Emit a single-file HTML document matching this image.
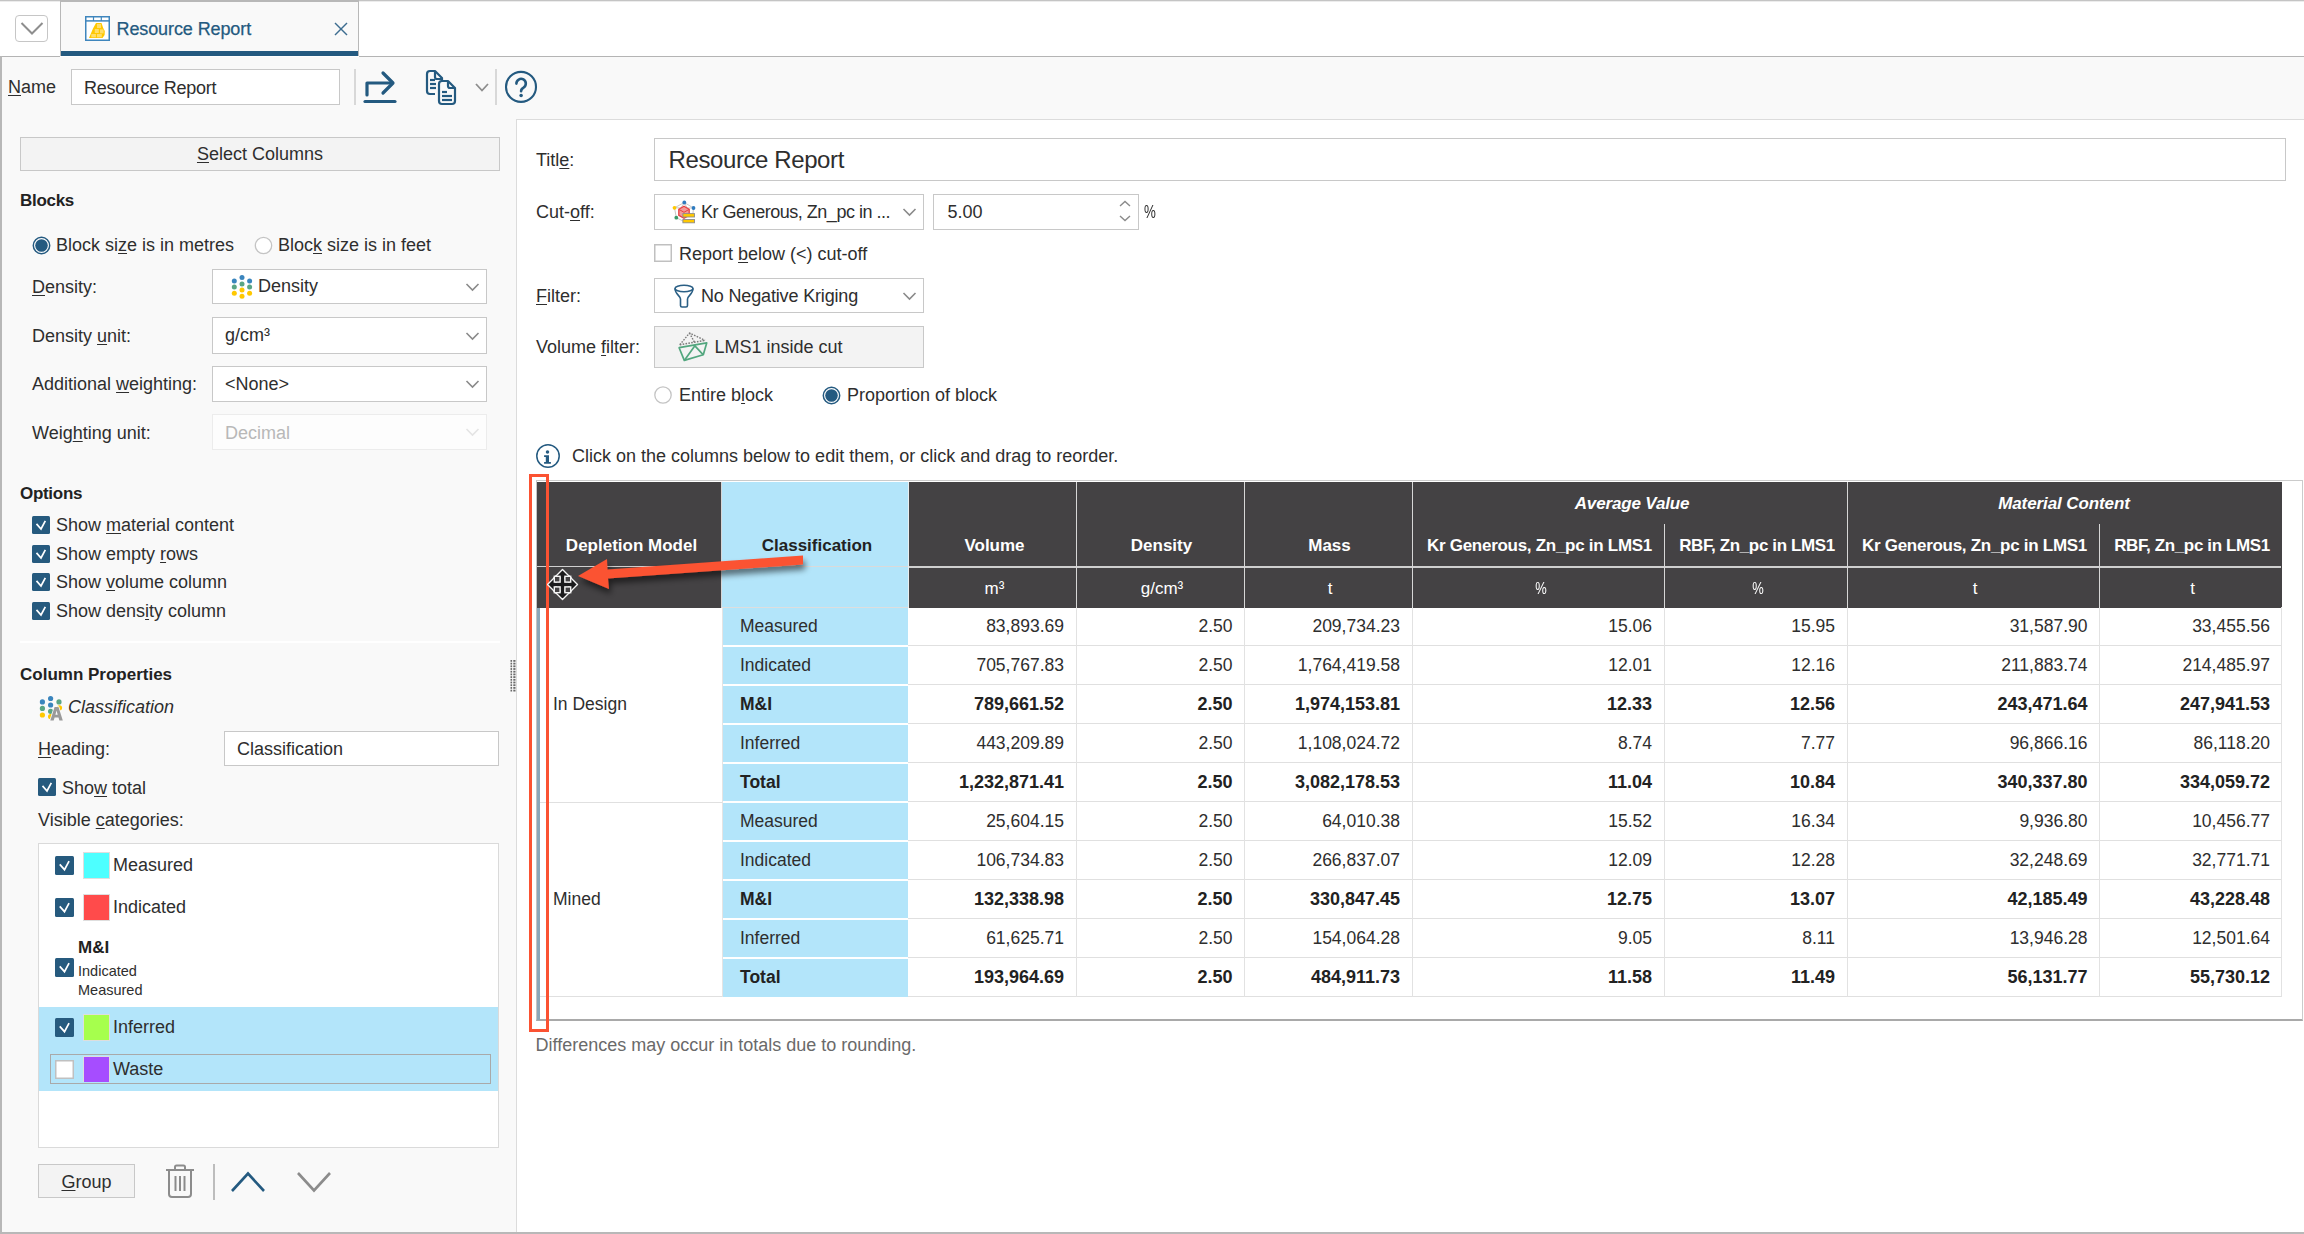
<!DOCTYPE html><html><head><meta charset="utf-8"><style>
html,body{margin:0;padding:0;}
body{width:2304px;height:1234px;position:relative;overflow:hidden;background:#fff;font-family:"Liberation Sans",sans-serif;color:#2e2e2e;}
.t{position:absolute;white-space:pre;}
u{text-decoration:underline;text-underline-offset:2px;text-decoration-thickness:1px;}
</style></head><body>

<div style="position:absolute;left:0px;top:0px;width:2304px;height:1px;background:#c4c4c4"></div>
<div style="position:absolute;left:0px;top:1px;width:2304px;height:1px;background:#ececec"></div>
<div style="position:absolute;left:15px;top:15px;width:31px;height:25px;border:1.5px solid #c6c6c6;border-radius:4px;background:#fff"></div>
<svg style="position:absolute;left:15px;top:15px;" width="34" height="28" viewBox="0 0 34 28"><polyline points="6.5,8 17,18.5 27.5,8" fill="none" stroke="#8e8e8e" stroke-width="2"/></svg>
<div style="position:absolute;left:60px;top:0px;width:299px;height:56px;background:#f9f9f9;border-left:1px solid #b8b8b8;border-right:1px solid #b8b8b8;box-sizing:border-box;border-top:2px solid #b8b8b8"></div>
<div style="position:absolute;left:61px;top:51px;width:297px;height:5px;background:#245a80"></div>
<svg style="position:absolute;left:85px;top:16px;" width="25" height="25" viewBox="0 0 25 25"><rect x="0.75" y="0.75" width="23.5" height="23.5" fill="#fff" stroke="#3f86bd" stroke-width="1.5"/>
<line x1="0.75" y1="4.9" x2="24.25" y2="4.9" stroke="#3f86bd" stroke-width="1.5"/>
<line x1="8.5" y1="1" x2="8.5" y2="5" stroke="#3f86bd" stroke-width="1.2"/><line x1="16.3" y1="1" x2="16.3" y2="5" stroke="#3f86bd" stroke-width="1.2"/>
<polygon points="4,22 8,12.5 11,7 16.5,7 18.2,12 19.8,15 19.6,19 17.5,22" fill="#ffc800"/>
<g fill="#ffde6a"><rect x="6.3" y="18" width="4.6" height="3.3"/><rect x="12" y="18" width="4.8" height="3.3"/><rect x="9.8" y="13" width="4" height="4"/><rect x="15" y="13.4" width="3.6" height="4"/><rect x="12" y="8" width="4" height="4"/></g></svg>
<div class="t" style="left:116.5px;top:20.26px;font-size:18px;line-height:18px;color:#245a80;letter-spacing:-0.1px;-webkit-text-stroke:0.25px #245a80;">Resource Report</div>
<svg style="position:absolute;left:334px;top:22px;" width="14" height="14" viewBox="0 0 14 14"><line x1="1" y1="1" x2="13" y2="13" stroke="#3d6d90" stroke-width="1.4"/><line x1="13" y1="1" x2="1" y2="13" stroke="#3d6d90" stroke-width="1.4"/></svg>
<div style="position:absolute;left:0px;top:56px;width:60px;height:1px;background:#b4b4b4"></div>
<div style="position:absolute;left:359px;top:56px;width:1945px;height:1px;background:#b4b4b4"></div>
<div style="position:absolute;left:0px;top:57px;width:2304px;height:62px;background:#f9f9f9"></div>
<div style="position:absolute;left:0px;top:56px;width:2px;height:1178px;background:#b8b8b8"></div>
<div class="t" style="left:8px;top:78.26px;font-size:18px;line-height:18px;"><u>N</u>ame</div>
<div style="position:absolute;left:71px;top:69px;width:269px;height:36px;background:#fff;border:1px solid #c8c8c8;box-sizing:border-box"></div>
<div class="t" style="left:84px;top:79.26px;font-size:18px;line-height:18px;letter-spacing:-0.25px;">Resource Report</div>
<div style="position:absolute;left:354px;top:69px;width:2px;height:36px;background:#d8d8d8"></div>
<svg style="position:absolute;left:362px;top:70px;" width="36" height="36" viewBox="0 0 36 36"><g fill="none" stroke="#245a80" stroke-width="3.2" stroke-linecap="round" stroke-linejoin="round">
<polyline points="5,25 5,13 30,13"/><polyline points="21,3 31,13 21,23"/><line x1="3" y1="31.5" x2="33" y2="31.5"/></g></svg>
<svg style="position:absolute;left:424px;top:68px;" width="34" height="38" viewBox="0 0 34 38"><g fill="none" stroke="#245a80" stroke-width="2.2" stroke-linejoin="round">
<path d="M11,26 H6 a3,3 0 0 1 -3,-3 V6 a3,3 0 0 1 3,-3 H11 L18,10 V13"/>
<path d="M11,3 V9 a2,2 0 0 0 2,2 H18"/>
<path d="M15,16 a3,3 0 0 1 3,-3 H24 L31,20 V33 a3,3 0 0 1 -3,3 H18 a3,3 0 0 1 -3,-3 Z"/>
<path d="M24,13 V18 a2,2 0 0 0 2,2 H31"/></g>
<g stroke="#245a80" stroke-width="2.2"><line x1="6" y1="12" x2="11" y2="12"/><line x1="6" y1="16" x2="12" y2="16"/><line x1="6" y1="20" x2="12" y2="20"/>
<line x1="18" y1="24" x2="23" y2="24"/><line x1="18" y1="28" x2="28" y2="28"/><line x1="18" y1="32" x2="28" y2="32"/></g></svg>
<svg style="position:absolute;left:474px;top:82px;" width="16" height="12" viewBox="0 0 16 12"><polyline points="2,2 8,8.5 14,2" fill="none" stroke="#8e8e8e" stroke-width="1.8"/></svg>
<div style="position:absolute;left:495px;top:69px;width:2px;height:36px;background:#d8d8d8"></div>
<svg style="position:absolute;left:503px;top:69px;" width="36" height="36" viewBox="0 0 36 36"><circle cx="18" cy="17.9" r="15" fill="none" stroke="#245a80" stroke-width="2.1"/>
<path d="M13.4,14.6 a4.7,4.7 0 1 1 7.1,4.0 c-1.6,0.9 -2.4,1.7 -2.4,3.7" fill="none" stroke="#245a80" stroke-width="2.6" stroke-linecap="round"/>
<circle cx="18.1" cy="26.4" r="1.75" fill="#245a80"/></svg>
<div style="position:absolute;left:2px;top:119px;width:514px;height:1114px;background:#f9f9f9"></div>
<div style="position:absolute;left:0px;top:1232px;width:2304px;height:2px;background:#b8b8b8"></div>
<div style="position:absolute;left:516px;top:119px;width:1788px;height:1113px;background:#fff;border-left:1px solid #dcdcdc;border-top:1px solid #dcdcdc;box-sizing:border-box"></div>
<div style="position:absolute;left:20px;top:137px;width:480px;height:34px;background:#f3f3f3;border:1px solid #c8c8c8;box-sizing:border-box"></div>
<div class="t" style="left:110.0px;width:300px;text-align:center;top:145.26px;font-size:18px;line-height:18px;"><u>S</u>elect Columns</div>
<div class="t" style="left:20px;top:192.11px;font-size:17px;line-height:17px;font-weight:700;color:#222;letter-spacing:-0.3px;">Blocks</div>
<svg style="position:absolute;left:32px;top:236px;" width="19" height="19" viewBox="0 0 19 19"><circle cx="9.5" cy="9.5" r="8.2" fill="#fff" stroke="#245a80" stroke-width="1.5"/><circle cx="9.5" cy="9.5" r="6.3" fill="#245a80"/></svg>
<div class="t" style="left:56px;top:236.26px;font-size:18px;line-height:18px;">Block si<u>z</u>e is in metres</div>
<svg style="position:absolute;left:254px;top:236px;" width="19" height="19" viewBox="0 0 19 19"><circle cx="9.5" cy="9.5" r="8.2" fill="#fff" stroke="#c4c4c4" stroke-width="1.3"/></svg>
<div class="t" style="left:278px;top:236.26px;font-size:18px;line-height:18px;">Bloc<u>k</u> size is in feet</div>
<div class="t" style="left:32px;top:278.26px;font-size:18px;line-height:18px;"><u>D</u>ensity:</div>
<div style="position:absolute;left:212px;top:269px;width:275px;height:35px;background:#fff;border:1.5px solid #c8c8c8;box-sizing:border-box"></div>
<svg style="position:absolute;left:465px;top:281.5px;" width="15" height="10" viewBox="0 0 15 10"><polyline points="1.5,2 7.5,8 13.5,2" fill="none" stroke="#8a8a8a" stroke-width="1.6"/></svg>
<svg style="position:absolute;left:230px;top:274px;" width="24" height="27" viewBox="0 0 24 27"><circle cx="4.3" cy="6.9" r="2.5" fill="#3a85bd"/><circle cx="12" cy="3.6" r="2.5" fill="#3a85bd"/><circle cx="19.6" cy="6.9" r="2.5" fill="#3a85bd"/><circle cx="4.3" cy="13.1" r="2.5" fill="#5aa584"/><circle cx="12" cy="9.9" r="2.5" fill="#5aa584"/><circle cx="19.6" cy="13.1" r="2.5" fill="#5aa584"/><circle cx="4.3" cy="19.3" r="2.5" fill="#ffc800"/><circle cx="12" cy="16" r="2.5" fill="#ffc800"/><circle cx="19.6" cy="19.3" r="2.5" fill="#ffc800"/><circle cx="12" cy="22.2" r="2.5" fill="#ffc800"/></svg>
<div class="t" style="left:258px;top:277.26px;font-size:18px;line-height:18px;">Density</div>
<div class="t" style="left:32px;top:327.26px;font-size:18px;line-height:18px;">Density <u>u</u>nit:</div>
<div style="position:absolute;left:212px;top:317px;width:275px;height:37px;background:#fff;border:1.5px solid #c8c8c8;box-sizing:border-box"></div>
<svg style="position:absolute;left:465px;top:330.5px;" width="15" height="10" viewBox="0 0 15 10"><polyline points="1.5,2 7.5,8 13.5,2" fill="none" stroke="#8a8a8a" stroke-width="1.6"/></svg>
<div class="t" style="left:225px;top:326.26px;font-size:18px;line-height:18px;">g/cm³</div>
<div class="t" style="left:32px;top:375.26px;font-size:18px;line-height:18px;">Additional <u>w</u>eighting:</div>
<div style="position:absolute;left:212px;top:366px;width:275px;height:36px;background:#fff;border:1.5px solid #c8c8c8;box-sizing:border-box"></div>
<svg style="position:absolute;left:465px;top:379.0px;" width="15" height="10" viewBox="0 0 15 10"><polyline points="1.5,2 7.5,8 13.5,2" fill="none" stroke="#8a8a8a" stroke-width="1.6"/></svg>
<div class="t" style="left:225px;top:375.26px;font-size:18px;line-height:18px;">&lt;None&gt;</div>
<div class="t" style="left:32px;top:424.26px;font-size:18px;line-height:18px;">Weig<u>h</u>ting unit:</div>
<div style="position:absolute;left:212px;top:414px;width:275px;height:36px;background:#fdfdfd;border:1.5px solid #ececec;box-sizing:border-box"></div>
<svg style="position:absolute;left:465px;top:427.0px;" width="15" height="10" viewBox="0 0 15 10"><polyline points="1.5,2 7.5,8 13.5,2" fill="none" stroke="#e4e4e4" stroke-width="1.6"/></svg>
<div class="t" style="left:225px;top:424.26px;font-size:18px;line-height:18px;color:#b8b8b8;">Decimal</div>
<div class="t" style="left:20px;top:484.61px;font-size:17px;line-height:17px;font-weight:700;color:#222;letter-spacing:-0.3px;">Options</div>
<svg style="position:absolute;left:32px;top:516px;" width="18" height="18" viewBox="0 0 18 18"><rect x="0" y="0" width="18" height="18" rx="1.5" fill="#265a7e"/><polyline points="4.5,7.92 9.0,12.959999999999999 13.32,4.86" fill="none" stroke="#fff" stroke-width="1.7"/></svg>
<div class="t" style="left:56px;top:515.76px;font-size:18px;line-height:18px;">Show <u>m</u>aterial content</div>
<svg style="position:absolute;left:32px;top:545px;" width="18" height="18" viewBox="0 0 18 18"><rect x="0" y="0" width="18" height="18" rx="1.5" fill="#265a7e"/><polyline points="4.5,7.92 9.0,12.959999999999999 13.32,4.86" fill="none" stroke="#fff" stroke-width="1.7"/></svg>
<div class="t" style="left:56px;top:544.76px;font-size:18px;line-height:18px;">Show empty <u>r</u>ows</div>
<svg style="position:absolute;left:32px;top:573px;" width="18" height="18" viewBox="0 0 18 18"><rect x="0" y="0" width="18" height="18" rx="1.5" fill="#265a7e"/><polyline points="4.5,7.92 9.0,12.959999999999999 13.32,4.86" fill="none" stroke="#fff" stroke-width="1.7"/></svg>
<div class="t" style="left:56px;top:572.76px;font-size:18px;line-height:18px;">Show <u>v</u>olume column</div>
<svg style="position:absolute;left:32px;top:602px;" width="18" height="18" viewBox="0 0 18 18"><rect x="0" y="0" width="18" height="18" rx="1.5" fill="#265a7e"/><polyline points="4.5,7.92 9.0,12.959999999999999 13.32,4.86" fill="none" stroke="#fff" stroke-width="1.7"/></svg>
<div class="t" style="left:56px;top:601.76px;font-size:18px;line-height:18px;">Show dens<u>i</u>ty column</div>
<div style="position:absolute;left:20px;top:641px;width:480px;height:2px;background:#fff"></div>
<div class="t" style="left:20px;top:666.11px;font-size:17px;line-height:17px;font-weight:700;color:#222;">Column Properties</div>
<svg style="position:absolute;left:39px;top:695px;" width="25" height="26" viewBox="0 0 25 26"><circle cx="3.4" cy="6.9" r="2.6" fill="#3a85bd"/><circle cx="11.6" cy="3.5" r="2.6" fill="#3a85bd"/><circle cx="20" cy="6.9" r="2.6" fill="#5aa584"/><circle cx="3.4" cy="13.4" r="2.6" fill="#5aa584"/><circle cx="11.6" cy="10" r="2.6" fill="#3a85bd"/><circle cx="3.4" cy="20" r="2.6" fill="#ffc800"/><circle cx="11.6" cy="16.3" r="2.6" fill="#5aa584"/><circle cx="20.5" cy="12.8" r="2.6" fill="#ffc800"/><circle cx="11.6" cy="21.5" r="2.6" fill="#ffc800"/><path d="M11.3,25.6 L15.6,12 L19.5,12 L23.8,25.6 L20.4,25.6 L19.5,22.6 L15.6,22.6 L14.7,25.6 Z M16.4,19.8 L18.7,19.8 L17.55,15.6 Z" fill="#9a9a9a" stroke="#f9f9f9" stroke-width="1.6" paint-order="stroke"/></svg>
<div class="t" style="left:68px;top:698.26px;font-size:18px;line-height:18px;font-style:italic;">Classification</div>
<div class="t" style="left:38px;top:740.26px;font-size:18px;line-height:18px;"><u>H</u>eading:</div>
<div style="position:absolute;left:224px;top:731px;width:275px;height:35px;background:#fff;border:1.5px solid #c8c8c8;box-sizing:border-box"></div>
<div class="t" style="left:237px;top:740.26px;font-size:18px;line-height:18px;">Classification</div>
<svg style="position:absolute;left:38px;top:778px;" width="18" height="18" viewBox="0 0 18 18"><rect x="0" y="0" width="18" height="18" rx="1.5" fill="#265a7e"/><polyline points="4.5,7.92 9.0,12.959999999999999 13.32,4.86" fill="none" stroke="#fff" stroke-width="1.7"/></svg>
<div class="t" style="left:62px;top:779.26px;font-size:18px;line-height:18px;">Sho<u>w</u> total</div>
<div class="t" style="left:38px;top:811.26px;font-size:18px;line-height:18px;">Visible <u>c</u>ategories:</div>
<div style="position:absolute;left:38px;top:843px;width:461px;height:305px;background:#fff;border:1px solid #dadada;box-sizing:border-box"></div>
<svg style="position:absolute;left:55px;top:856px;" width="19" height="19" viewBox="0 0 19 19"><rect x="0" y="0" width="19" height="19" rx="1.5" fill="#265a7e"/><polyline points="4.75,8.36 9.5,13.68 14.06,5.130000000000001" fill="none" stroke="#fff" stroke-width="1.7"/></svg>
<div style="position:absolute;left:83px;top:852px;width:27px;height:27px;background:#4dffff;border:1.5px solid #dedede;box-sizing:border-box"></div>
<div class="t" style="left:113px;top:856.26px;font-size:18px;line-height:18px;">Measured</div>
<svg style="position:absolute;left:55px;top:898px;" width="19" height="19" viewBox="0 0 19 19"><rect x="0" y="0" width="19" height="19" rx="1.5" fill="#265a7e"/><polyline points="4.75,8.36 9.5,13.68 14.06,5.130000000000001" fill="none" stroke="#fff" stroke-width="1.7"/></svg>
<div style="position:absolute;left:83px;top:894px;width:27px;height:27px;background:#ff4b4b;border:1.5px solid #dedede;box-sizing:border-box"></div>
<div class="t" style="left:113px;top:898.26px;font-size:18px;line-height:18px;">Indicated</div>
<div class="t" style="left:78px;top:939.11px;font-size:17px;line-height:17px;font-weight:700;color:#222;">M&amp;I</div>
<svg style="position:absolute;left:55px;top:958px;" width="19" height="19" viewBox="0 0 19 19"><rect x="0" y="0" width="19" height="19" rx="1.5" fill="#265a7e"/><polyline points="4.75,8.36 9.5,13.68 14.06,5.130000000000001" fill="none" stroke="#fff" stroke-width="1.7"/></svg>
<div class="t" style="left:78px;top:964.23px;font-size:14.5px;line-height:14.5px;">Indicated</div>
<div class="t" style="left:78px;top:983.23px;font-size:14.5px;line-height:14.5px;">Measured</div>
<div style="position:absolute;left:39px;top:1007px;width:459px;height:84px;background:#b3e5fa"></div>
<svg style="position:absolute;left:55px;top:1018px;" width="19" height="19" viewBox="0 0 19 19"><rect x="0" y="0" width="19" height="19" rx="1.5" fill="#265a7e"/><polyline points="4.75,8.36 9.5,13.68 14.06,5.130000000000001" fill="none" stroke="#fff" stroke-width="1.7"/></svg>
<div style="position:absolute;left:83px;top:1014px;width:27px;height:27px;background:#a6ff4d;border:1.5px solid #dedede;box-sizing:border-box"></div>
<div class="t" style="left:113px;top:1018.26px;font-size:18px;line-height:18px;">Inferred</div>
<div style="position:absolute;left:50px;top:1054px;width:441px;height:30px;border:1.5px solid #a9a9a9;box-sizing:border-box"></div>
<svg style="position:absolute;left:55px;top:1060px;" width="19" height="19" viewBox="0 0 19 19"><rect x="0.75" y="0.75" width="17.5" height="17.5" fill="#fff" stroke="#c0c0c0" stroke-width="1.5"/></svg>
<div style="position:absolute;left:83px;top:1056px;width:27px;height:26px;background:#a64dff;border:1.5px solid #dedede;border-bottom:none;box-sizing:border-box"></div>
<div class="t" style="left:113px;top:1059.76px;font-size:18px;line-height:18px;">Waste</div>
<div style="position:absolute;left:38px;top:1164px;width:97px;height:34px;background:#f3f3f3;border:1px solid #c8c8c8;box-sizing:border-box"></div>
<div class="t" style="left:41.5px;width:90px;text-align:center;top:1173.26px;font-size:18px;line-height:18px;"><u>G</u>roup</div>
<svg style="position:absolute;left:164px;top:1164px;" width="32" height="36" viewBox="0 0 32 36"><g fill="none" stroke="#8c8c8c" stroke-width="2">
<line x1="2" y1="6" x2="30" y2="6"/><path d="M11,6 V3 a1.5,1.5 0 0 1 1.5,-1.5 h7 a1.5,1.5 0 0 1 1.5,1.5 V6"/>
<path d="M5,6 V30 a3,3 0 0 0 3,3 H24 a3,3 0 0 0 3,-3 V6"/>
<line x1="11.5" y1="12" x2="11.5" y2="27"/><line x1="16" y1="12" x2="16" y2="27"/><line x1="20.5" y1="12" x2="20.5" y2="27"/></g></svg>
<div style="position:absolute;left:213px;top:1164px;width:2px;height:36px;background:#bdbdbd"></div>
<svg style="position:absolute;left:229px;top:1170px;" width="38" height="24" viewBox="0 0 38 24"><polyline points="3,21 19,3.5 35,21" fill="none" stroke="#245a80" stroke-width="2.6"/></svg>
<svg style="position:absolute;left:295px;top:1170px;" width="38" height="24" viewBox="0 0 38 24"><polyline points="3,3 19,20.5 35,3" fill="none" stroke="#8c8c8c" stroke-width="2.6"/></svg>
<svg style="position:absolute;left:510px;top:660px;" width="6" height="33" viewBox="0 0 6 33"><rect x="0.5" y="0.0" width="1.6" height="1.8" fill="#6a6a6a"/><rect x="3.3" y="0.0" width="2.2" height="1.8" fill="#6a6a6a"/><rect x="0.5" y="2.7" width="1.6" height="1.8" fill="#6a6a6a"/><rect x="3.3" y="2.7" width="2.2" height="1.8" fill="#6a6a6a"/><rect x="0.5" y="5.4" width="1.6" height="1.8" fill="#6a6a6a"/><rect x="3.3" y="5.4" width="2.2" height="1.8" fill="#6a6a6a"/><rect x="0.5" y="8.100000000000001" width="1.6" height="1.8" fill="#6a6a6a"/><rect x="3.3" y="8.100000000000001" width="2.2" height="1.8" fill="#6a6a6a"/><rect x="0.5" y="10.8" width="1.6" height="1.8" fill="#6a6a6a"/><rect x="3.3" y="10.8" width="2.2" height="1.8" fill="#6a6a6a"/><rect x="0.5" y="13.5" width="1.6" height="1.8" fill="#6a6a6a"/><rect x="3.3" y="13.5" width="2.2" height="1.8" fill="#6a6a6a"/><rect x="0.5" y="16.200000000000003" width="1.6" height="1.8" fill="#6a6a6a"/><rect x="3.3" y="16.200000000000003" width="2.2" height="1.8" fill="#6a6a6a"/><rect x="0.5" y="18.900000000000002" width="1.6" height="1.8" fill="#6a6a6a"/><rect x="3.3" y="18.900000000000002" width="2.2" height="1.8" fill="#6a6a6a"/><rect x="0.5" y="21.6" width="1.6" height="1.8" fill="#6a6a6a"/><rect x="3.3" y="21.6" width="2.2" height="1.8" fill="#6a6a6a"/><rect x="0.5" y="24.3" width="1.6" height="1.8" fill="#6a6a6a"/><rect x="3.3" y="24.3" width="2.2" height="1.8" fill="#6a6a6a"/><rect x="0.5" y="27.0" width="1.6" height="1.8" fill="#6a6a6a"/><rect x="3.3" y="27.0" width="2.2" height="1.8" fill="#6a6a6a"/><rect x="0.5" y="29.700000000000003" width="1.6" height="1.8" fill="#6a6a6a"/><rect x="3.3" y="29.700000000000003" width="2.2" height="1.8" fill="#6a6a6a"/></svg>
<div class="t" style="left:536px;top:151.26px;font-size:18px;line-height:18px;">Titl<u>e</u>:</div>
<div style="position:absolute;left:654px;top:138px;width:1632px;height:43px;background:#fff;border:1.5px solid #c8c8c8;box-sizing:border-box"></div>
<div class="t" style="left:668.5px;top:148.18px;font-size:24px;line-height:24px;letter-spacing:-0.4px;">Resource Report</div>
<div class="t" style="left:536px;top:203.26px;font-size:18px;line-height:18px;">Cut-<u>o</u>ff:</div>
<div style="position:absolute;left:654px;top:194px;width:270px;height:36px;background:#fff;border:1.5px solid #c8c8c8;box-sizing:border-box"></div>
<svg style="position:absolute;left:902px;top:207.0px;" width="15" height="10" viewBox="0 0 15 10"><polyline points="1.5,2 7.5,8 13.5,2" fill="none" stroke="#8a8a8a" stroke-width="1.6"/></svg>
<svg style="position:absolute;left:672px;top:200px;" width="24" height="24" viewBox="0 0 24 24"><g stroke="#c8c8c8" stroke-width="1" fill="none"><polyline points="2.5,7.8 12.3,2.5 21.5,8"/><line x1="2.5" y1="7.8" x2="4.3" y2="17.7"/><line x1="4.3" y1="17.7" x2="11" y2="21"/><line x1="21.5" y1="8" x2="21" y2="13"/><line x1="2.5" y1="7.8" x2="21.5" y2="8"/><line x1="12.3" y1="2.5" x2="9" y2="7.8"/><line x1="12.3" y1="2.5" x2="15" y2="7.8"/></g>
<polygon points="12,6.3 17.2,9.3 17.2,15.3 12,18.3 6.8,15.3 6.8,9.3" fill="#f29a9a" stroke="#e84040" stroke-width="1.3"/><polyline points="6.8,9.3 12,12.3 17.2,9.3" fill="none" stroke="#e84040" stroke-width="1"/>
<circle cx="12.3" cy="2.5" r="1.9" fill="#2e7bbf"/><circle cx="21.5" cy="8" r="1.9" fill="#2e7bbf"/><circle cx="2.5" cy="7.8" r="1.9" fill="#ffc800"/><circle cx="4.3" cy="17.7" r="1.9" fill="#3a9a68"/>
<rect x="10.9" y="13.6" width="11.6" height="3.4" fill="#ffc800" stroke="#8c8c8c" stroke-width="0.9"/><rect x="10.9" y="19.5" width="11.6" height="3.3" fill="#ffc800" stroke="#8c8c8c" stroke-width="0.9"/></svg>
<div class="t" style="left:701px;top:203.26px;font-size:18px;line-height:18px;letter-spacing:-0.48px;">Kr Generous, Zn_pc in ...</div>
<div style="position:absolute;left:933px;top:194px;width:206px;height:36px;background:#fff;border:1.5px solid #c8c8c8;box-sizing:border-box"></div>
<div class="t" style="left:947.5px;top:203.26px;font-size:18px;line-height:18px;">5.00</div>
<svg style="position:absolute;left:1117px;top:199px;" width="16" height="25" viewBox="0 0 16 25"><polyline points="3,7 8,2.5 13,7" fill="none" stroke="#8a8a8a" stroke-width="1.4"/><polyline points="3,17 8,21.5 13,17" fill="none" stroke="#8a8a8a" stroke-width="1.4"/></svg>
<div class="t" style="left:1143.5px;top:203.26px;font-size:18px;line-height:18px;transform:scaleX(0.74);transform-origin:0 0;">%</div>
<svg style="position:absolute;left:654px;top:244px;" width="18" height="18" viewBox="0 0 18 18"><rect x="0.75" y="0.75" width="16.5" height="16.5" fill="#fff" stroke="#c0c0c0" stroke-width="1.5"/></svg>
<div class="t" style="left:679px;top:245.26px;font-size:18px;line-height:18px;">Report <u>b</u>elow (&lt;) cut-off</div>
<div class="t" style="left:536px;top:286.76px;font-size:18px;line-height:18px;"><u>F</u>ilter:</div>
<div style="position:absolute;left:654px;top:278px;width:270px;height:35px;background:#fff;border:1.5px solid #c8c8c8;box-sizing:border-box"></div>
<svg style="position:absolute;left:902px;top:290.5px;" width="15" height="10" viewBox="0 0 15 10"><polyline points="1.5,2 7.5,8 13.5,2" fill="none" stroke="#8a8a8a" stroke-width="1.6"/></svg>
<svg style="position:absolute;left:673px;top:284px;" width="22" height="25" viewBox="0 0 22 25"><g fill="none" stroke="#2a5f85" stroke-width="1.6"><ellipse cx="11" cy="4.5" rx="9" ry="3.2"/>
<path d="M2,4.5 C2,10 7.5,12 7.5,15 V21.5 a1.5,1.5 0 0 0 1.5,1.5 h4 a1.5,1.5 0 0 0 1.5,-1.5 V15 C14.5,12 20,10 20,4.5"/></g></svg>
<div class="t" style="left:701px;top:286.76px;font-size:18px;line-height:18px;letter-spacing:-0.16px;">No Negative Kriging</div>
<div class="t" style="left:536px;top:338.26px;font-size:18px;line-height:18px;">Volume <u>f</u>ilter:</div>
<div style="position:absolute;left:654px;top:326px;width:270px;height:42px;background:#f3f3f3;border:1.5px solid #c8c8c8;box-sizing:border-box"></div>
<svg style="position:absolute;left:672px;top:326px;" width="40" height="40" viewBox="0 0 40 40"><g fill="none" stroke="#7a7a7a" stroke-width="1.4" stroke-dasharray="1.6,1.3"><polyline points="7.8,18.8 17.5,7 33,14.3"/><line x1="17.5" y1="7" x2="22.4" y2="16.2"/><line x1="7.8" y1="18.8" x2="33" y2="14.3"/></g>
<g fill="none" stroke="#52a67e" stroke-width="1.7" stroke-linejoin="round"><polygon points="7.1,21.7 34.7,16.9 31.3,28.8 12.3,34.4"/><polyline points="12.3,34.4 22.9,19.8 31.3,28.8"/></g></svg>
<div class="t" style="left:714.5px;top:338.26px;font-size:18px;line-height:18px;">LMS1 inside cut</div>
<svg style="position:absolute;left:654px;top:386px;" width="19" height="19" viewBox="0 0 19 19"><circle cx="9" cy="9" r="8.2" fill="#fff" stroke="#c4c4c4" stroke-width="1.3"/></svg>
<div class="t" style="left:679px;top:386.26px;font-size:18px;line-height:18px;">Entire b<u>l</u>ock</div>
<svg style="position:absolute;left:822px;top:386px;" width="19" height="19" viewBox="0 0 19 19"><circle cx="9.5" cy="9.5" r="8.2" fill="#fff" stroke="#245a80" stroke-width="1.5"/><circle cx="9.5" cy="9.5" r="6.3" fill="#245a80"/></svg>
<div class="t" style="left:847px;top:386.26px;font-size:18px;line-height:18px;">Proportion of block</div>
<svg style="position:absolute;left:535px;top:443px;" width="26" height="26" viewBox="0 0 26 26"><circle cx="13" cy="13" r="11.2" fill="none" stroke="#245a80" stroke-width="1.5"/>
<circle cx="12.5" cy="8.9" r="1.75" fill="#245a80"/><path d="M9.1,12.3 H14 V19 H15.9 V20.8 H9.1 V19 H10.8 V14 H9.1 Z" fill="#245a80"/></svg>
<div class="t" style="left:572px;top:446.76px;font-size:18px;line-height:18px;">Click on the columns below to edit them, or click and drag to reorder.</div>
<div style="position:absolute;left:536px;top:480px;width:1767px;height:541px;background:#fff;border-left:1px solid #c4c4c4;border-top:1px solid #cbcbcb;border-right:1px solid #cbcbcb;border-bottom:2px solid #a9a9a9;box-sizing:border-box"></div>
<div style="position:absolute;left:537px;top:482px;width:1745px;height:126px;background:#444244"></div>
<div style="position:absolute;left:722px;top:482px;width:186px;height:124.5px;background:#b3e5fa"></div>
<div style="position:absolute;left:722px;top:606.5px;width:186px;height:1.5px;background:#dedede"></div>
<div style="position:absolute;left:537px;top:566px;width:185px;height:1px;background:#cfcfcf"></div>
<div style="position:absolute;left:722px;top:566px;width:186px;height:1px;background:#dadada"></div>
<div style="position:absolute;left:908px;top:566px;width:1373px;height:1.5px;background:#cfcfcf"></div>
<div style="position:absolute;left:721px;top:482px;width:1.3px;height:126px;background:#d6d6d6"></div>
<div style="position:absolute;left:1076px;top:482px;width:1.3px;height:126px;background:#d6d6d6"></div>
<div style="position:absolute;left:1244px;top:482px;width:1.3px;height:126px;background:#d6d6d6"></div>
<div style="position:absolute;left:1412px;top:482px;width:1.3px;height:126px;background:#d6d6d6"></div>
<div style="position:absolute;left:1847px;top:482px;width:1.3px;height:126px;background:#d6d6d6"></div>
<div style="position:absolute;left:908px;top:482px;width:1.3px;height:126px;background:#e8eef0"></div>
<div style="position:absolute;left:1664px;top:524px;width:1.3px;height:84px;background:#d6d6d6"></div>
<div style="position:absolute;left:2099px;top:524px;width:1.3px;height:84px;background:#d6d6d6"></div>
<div class="t" style="left:1482.0px;width:300px;text-align:center;top:495.11px;font-size:17px;line-height:17px;font-weight:700;font-style:italic;color:#ffffff;letter-spacing:-0.15px;">Average Value</div>
<div class="t" style="left:1914.0px;width:300px;text-align:center;top:495.11px;font-size:17px;line-height:17px;font-weight:700;font-style:italic;color:#ffffff;letter-spacing:-0.1px;">Material Content</div>
<div class="t" style="left:481.5px;width:300px;text-align:center;top:536.61px;font-size:17px;line-height:17px;font-weight:700;color:#ffffff;">Depletion Model</div>
<div class="t" style="left:667.0px;width:300px;text-align:center;top:536.61px;font-size:17px;line-height:17px;font-weight:700;color:#222;">Classification</div>
<div class="t" style="left:844.5px;width:300px;text-align:center;top:536.61px;font-size:17px;line-height:17px;font-weight:700;color:#ffffff;">Volume</div>
<div class="t" style="left:1011.5px;width:300px;text-align:center;top:536.61px;font-size:17px;line-height:17px;font-weight:700;color:#ffffff;">Density</div>
<div class="t" style="left:1179.5px;width:300px;text-align:center;top:536.61px;font-size:17px;line-height:17px;font-weight:700;color:#ffffff;">Mass</div>
<div class="t" style="left:1389.5px;width:300px;text-align:center;top:536.61px;font-size:17px;line-height:17px;font-weight:700;color:#ffffff;letter-spacing:-0.28px;">Kr Generous, Zn_pc in LMS1</div>
<div class="t" style="left:1607.0px;width:300px;text-align:center;top:536.61px;font-size:17px;line-height:17px;font-weight:700;color:#ffffff;letter-spacing:-0.38px;">RBF, Zn_pc in LMS1</div>
<div class="t" style="left:1824.5px;width:300px;text-align:center;top:536.61px;font-size:17px;line-height:17px;font-weight:700;color:#ffffff;letter-spacing:-0.28px;">Kr Generous, Zn_pc in LMS1</div>
<div class="t" style="left:2042.0px;width:300px;text-align:center;top:536.61px;font-size:17px;line-height:17px;font-weight:700;color:#ffffff;letter-spacing:-0.38px;">RBF, Zn_pc in LMS1</div>
<div class="t" style="left:894.5px;width:200px;text-align:center;top:579.61px;font-size:17px;line-height:17px;color:#ffffff;">m³</div>
<div class="t" style="left:1062.0px;width:200px;text-align:center;top:579.61px;font-size:17px;line-height:17px;color:#ffffff;">g/cm³</div>
<div class="t" style="left:1230.0px;width:200px;text-align:center;top:579.61px;font-size:17px;line-height:17px;color:#ffffff;">t</div>
<div class="t" style="left:1875.0px;width:200px;text-align:center;top:579.61px;font-size:17px;line-height:17px;color:#ffffff;">t</div>
<div class="t" style="left:2092.5px;width:200px;text-align:center;top:579.61px;font-size:17px;line-height:17px;color:#ffffff;">t</div>
<div class="t" style="left:1520.5px;width:40px;text-align:center;top:579.61px;font-size:17px;line-height:17px;color:#ffffff;transform:scaleX(0.76);">%</div>
<div class="t" style="left:1738.0px;width:40px;text-align:center;top:579.61px;font-size:17px;line-height:17px;color:#ffffff;transform:scaleX(0.76);">%</div>
<div style="position:absolute;left:537px;top:608px;width:3px;height:412px;background:#8ba7ba"></div>
<div style="position:absolute;left:722px;top:608px;width:186px;height:389px;background:#b3e5fa"></div>
<div style="position:absolute;left:722px;top:644.5px;width:186px;height:2px;background:#ffffff"></div>
<div style="position:absolute;left:908px;top:645px;width:1373px;height:1px;background:#e0e0e0"></div>
<div class="t" style="left:740px;top:617.69px;font-size:17.5px;line-height:17.5px;">Measured</div>
<div class="t" style="left:864px;width:200px;text-align:right;top:617.69px;font-size:17.5px;line-height:17.5px;">83,893.69</div>
<div class="t" style="left:1032.5px;width:200px;text-align:right;top:617.69px;font-size:17.5px;line-height:17.5px;">2.50</div>
<div class="t" style="left:1200px;width:200px;text-align:right;top:617.69px;font-size:17.5px;line-height:17.5px;">209,734.23</div>
<div class="t" style="left:1452px;width:200px;text-align:right;top:617.69px;font-size:17.5px;line-height:17.5px;">15.06</div>
<div class="t" style="left:1635px;width:200px;text-align:right;top:617.69px;font-size:17.5px;line-height:17.5px;">15.95</div>
<div class="t" style="left:1887.5px;width:200px;text-align:right;top:617.69px;font-size:17.5px;line-height:17.5px;">31,587.90</div>
<div class="t" style="left:2070px;width:200px;text-align:right;top:617.69px;font-size:17.5px;line-height:17.5px;">33,455.56</div>
<div style="position:absolute;left:722px;top:683.5px;width:186px;height:2px;background:#ffffff"></div>
<div style="position:absolute;left:908px;top:684px;width:1373px;height:1px;background:#e0e0e0"></div>
<div class="t" style="left:740px;top:656.69px;font-size:17.5px;line-height:17.5px;">Indicated</div>
<div class="t" style="left:864px;width:200px;text-align:right;top:656.69px;font-size:17.5px;line-height:17.5px;">705,767.83</div>
<div class="t" style="left:1032.5px;width:200px;text-align:right;top:656.69px;font-size:17.5px;line-height:17.5px;">2.50</div>
<div class="t" style="left:1200px;width:200px;text-align:right;top:656.69px;font-size:17.5px;line-height:17.5px;">1,764,419.58</div>
<div class="t" style="left:1452px;width:200px;text-align:right;top:656.69px;font-size:17.5px;line-height:17.5px;">12.01</div>
<div class="t" style="left:1635px;width:200px;text-align:right;top:656.69px;font-size:17.5px;line-height:17.5px;">12.16</div>
<div class="t" style="left:1887.5px;width:200px;text-align:right;top:656.69px;font-size:17.5px;line-height:17.5px;">211,883.74</div>
<div class="t" style="left:2070px;width:200px;text-align:right;top:656.69px;font-size:17.5px;line-height:17.5px;">214,485.97</div>
<div style="position:absolute;left:722px;top:722.5px;width:186px;height:2px;background:#ffffff"></div>
<div style="position:absolute;left:908px;top:723px;width:1373px;height:1px;background:#e0e0e0"></div>
<div class="t" style="left:740px;top:695.69px;font-size:17.5px;line-height:17.5px;font-weight:700;color:#222;">M&amp;I</div>
<div class="t" style="left:864px;width:200px;text-align:right;top:695.26px;font-size:18px;line-height:18px;font-weight:700;color:#222;">789,661.52</div>
<div class="t" style="left:1032.5px;width:200px;text-align:right;top:695.26px;font-size:18px;line-height:18px;font-weight:700;color:#222;">2.50</div>
<div class="t" style="left:1200px;width:200px;text-align:right;top:695.26px;font-size:18px;line-height:18px;font-weight:700;color:#222;">1,974,153.81</div>
<div class="t" style="left:1452px;width:200px;text-align:right;top:695.26px;font-size:18px;line-height:18px;font-weight:700;color:#222;">12.33</div>
<div class="t" style="left:1635px;width:200px;text-align:right;top:695.26px;font-size:18px;line-height:18px;font-weight:700;color:#222;">12.56</div>
<div class="t" style="left:1887.5px;width:200px;text-align:right;top:695.26px;font-size:18px;line-height:18px;font-weight:700;color:#222;">243,471.64</div>
<div class="t" style="left:2070px;width:200px;text-align:right;top:695.26px;font-size:18px;line-height:18px;font-weight:700;color:#222;">247,941.53</div>
<div style="position:absolute;left:722px;top:761.5px;width:186px;height:2px;background:#ffffff"></div>
<div style="position:absolute;left:908px;top:762px;width:1373px;height:1px;background:#e0e0e0"></div>
<div class="t" style="left:740px;top:734.69px;font-size:17.5px;line-height:17.5px;">Inferred</div>
<div class="t" style="left:864px;width:200px;text-align:right;top:734.69px;font-size:17.5px;line-height:17.5px;">443,209.89</div>
<div class="t" style="left:1032.5px;width:200px;text-align:right;top:734.69px;font-size:17.5px;line-height:17.5px;">2.50</div>
<div class="t" style="left:1200px;width:200px;text-align:right;top:734.69px;font-size:17.5px;line-height:17.5px;">1,108,024.72</div>
<div class="t" style="left:1452px;width:200px;text-align:right;top:734.69px;font-size:17.5px;line-height:17.5px;">8.74</div>
<div class="t" style="left:1635px;width:200px;text-align:right;top:734.69px;font-size:17.5px;line-height:17.5px;">7.77</div>
<div class="t" style="left:1887.5px;width:200px;text-align:right;top:734.69px;font-size:17.5px;line-height:17.5px;">96,866.16</div>
<div class="t" style="left:2070px;width:200px;text-align:right;top:734.69px;font-size:17.5px;line-height:17.5px;">86,118.20</div>
<div style="position:absolute;left:722px;top:800.5px;width:186px;height:2px;background:#ffffff"></div>
<div style="position:absolute;left:908px;top:801px;width:1373px;height:1px;background:#e0e0e0"></div>
<div class="t" style="left:740px;top:773.69px;font-size:17.5px;line-height:17.5px;font-weight:700;color:#222;">Total</div>
<div class="t" style="left:864px;width:200px;text-align:right;top:773.26px;font-size:18px;line-height:18px;font-weight:700;color:#222;">1,232,871.41</div>
<div class="t" style="left:1032.5px;width:200px;text-align:right;top:773.26px;font-size:18px;line-height:18px;font-weight:700;color:#222;">2.50</div>
<div class="t" style="left:1200px;width:200px;text-align:right;top:773.26px;font-size:18px;line-height:18px;font-weight:700;color:#222;">3,082,178.53</div>
<div class="t" style="left:1452px;width:200px;text-align:right;top:773.26px;font-size:18px;line-height:18px;font-weight:700;color:#222;">11.04</div>
<div class="t" style="left:1635px;width:200px;text-align:right;top:773.26px;font-size:18px;line-height:18px;font-weight:700;color:#222;">10.84</div>
<div class="t" style="left:1887.5px;width:200px;text-align:right;top:773.26px;font-size:18px;line-height:18px;font-weight:700;color:#222;">340,337.80</div>
<div class="t" style="left:2070px;width:200px;text-align:right;top:773.26px;font-size:18px;line-height:18px;font-weight:700;color:#222;">334,059.72</div>
<div style="position:absolute;left:722px;top:839.5px;width:186px;height:2px;background:#ffffff"></div>
<div style="position:absolute;left:908px;top:840px;width:1373px;height:1px;background:#e0e0e0"></div>
<div class="t" style="left:740px;top:812.69px;font-size:17.5px;line-height:17.5px;">Measured</div>
<div class="t" style="left:864px;width:200px;text-align:right;top:812.69px;font-size:17.5px;line-height:17.5px;">25,604.15</div>
<div class="t" style="left:1032.5px;width:200px;text-align:right;top:812.69px;font-size:17.5px;line-height:17.5px;">2.50</div>
<div class="t" style="left:1200px;width:200px;text-align:right;top:812.69px;font-size:17.5px;line-height:17.5px;">64,010.38</div>
<div class="t" style="left:1452px;width:200px;text-align:right;top:812.69px;font-size:17.5px;line-height:17.5px;">15.52</div>
<div class="t" style="left:1635px;width:200px;text-align:right;top:812.69px;font-size:17.5px;line-height:17.5px;">16.34</div>
<div class="t" style="left:1887.5px;width:200px;text-align:right;top:812.69px;font-size:17.5px;line-height:17.5px;">9,936.80</div>
<div class="t" style="left:2070px;width:200px;text-align:right;top:812.69px;font-size:17.5px;line-height:17.5px;">10,456.77</div>
<div style="position:absolute;left:722px;top:878.5px;width:186px;height:2px;background:#ffffff"></div>
<div style="position:absolute;left:908px;top:879px;width:1373px;height:1px;background:#e0e0e0"></div>
<div class="t" style="left:740px;top:851.69px;font-size:17.5px;line-height:17.5px;">Indicated</div>
<div class="t" style="left:864px;width:200px;text-align:right;top:851.69px;font-size:17.5px;line-height:17.5px;">106,734.83</div>
<div class="t" style="left:1032.5px;width:200px;text-align:right;top:851.69px;font-size:17.5px;line-height:17.5px;">2.50</div>
<div class="t" style="left:1200px;width:200px;text-align:right;top:851.69px;font-size:17.5px;line-height:17.5px;">266,837.07</div>
<div class="t" style="left:1452px;width:200px;text-align:right;top:851.69px;font-size:17.5px;line-height:17.5px;">12.09</div>
<div class="t" style="left:1635px;width:200px;text-align:right;top:851.69px;font-size:17.5px;line-height:17.5px;">12.28</div>
<div class="t" style="left:1887.5px;width:200px;text-align:right;top:851.69px;font-size:17.5px;line-height:17.5px;">32,248.69</div>
<div class="t" style="left:2070px;width:200px;text-align:right;top:851.69px;font-size:17.5px;line-height:17.5px;">32,771.71</div>
<div style="position:absolute;left:722px;top:917.5px;width:186px;height:2px;background:#ffffff"></div>
<div style="position:absolute;left:908px;top:918px;width:1373px;height:1px;background:#e0e0e0"></div>
<div class="t" style="left:740px;top:890.69px;font-size:17.5px;line-height:17.5px;font-weight:700;color:#222;">M&amp;I</div>
<div class="t" style="left:864px;width:200px;text-align:right;top:890.26px;font-size:18px;line-height:18px;font-weight:700;color:#222;">132,338.98</div>
<div class="t" style="left:1032.5px;width:200px;text-align:right;top:890.26px;font-size:18px;line-height:18px;font-weight:700;color:#222;">2.50</div>
<div class="t" style="left:1200px;width:200px;text-align:right;top:890.26px;font-size:18px;line-height:18px;font-weight:700;color:#222;">330,847.45</div>
<div class="t" style="left:1452px;width:200px;text-align:right;top:890.26px;font-size:18px;line-height:18px;font-weight:700;color:#222;">12.75</div>
<div class="t" style="left:1635px;width:200px;text-align:right;top:890.26px;font-size:18px;line-height:18px;font-weight:700;color:#222;">13.07</div>
<div class="t" style="left:1887.5px;width:200px;text-align:right;top:890.26px;font-size:18px;line-height:18px;font-weight:700;color:#222;">42,185.49</div>
<div class="t" style="left:2070px;width:200px;text-align:right;top:890.26px;font-size:18px;line-height:18px;font-weight:700;color:#222;">43,228.48</div>
<div style="position:absolute;left:722px;top:956.5px;width:186px;height:2px;background:#ffffff"></div>
<div style="position:absolute;left:908px;top:957px;width:1373px;height:1px;background:#e0e0e0"></div>
<div class="t" style="left:740px;top:929.69px;font-size:17.5px;line-height:17.5px;">Inferred</div>
<div class="t" style="left:864px;width:200px;text-align:right;top:929.69px;font-size:17.5px;line-height:17.5px;">61,625.71</div>
<div class="t" style="left:1032.5px;width:200px;text-align:right;top:929.69px;font-size:17.5px;line-height:17.5px;">2.50</div>
<div class="t" style="left:1200px;width:200px;text-align:right;top:929.69px;font-size:17.5px;line-height:17.5px;">154,064.28</div>
<div class="t" style="left:1452px;width:200px;text-align:right;top:929.69px;font-size:17.5px;line-height:17.5px;">9.05</div>
<div class="t" style="left:1635px;width:200px;text-align:right;top:929.69px;font-size:17.5px;line-height:17.5px;">8.11</div>
<div class="t" style="left:1887.5px;width:200px;text-align:right;top:929.69px;font-size:17.5px;line-height:17.5px;">13,946.28</div>
<div class="t" style="left:2070px;width:200px;text-align:right;top:929.69px;font-size:17.5px;line-height:17.5px;">12,501.64</div>
<div style="position:absolute;left:908px;top:996px;width:1373px;height:1px;background:#e0e0e0"></div>
<div class="t" style="left:740px;top:968.69px;font-size:17.5px;line-height:17.5px;font-weight:700;color:#222;">Total</div>
<div class="t" style="left:864px;width:200px;text-align:right;top:968.26px;font-size:18px;line-height:18px;font-weight:700;color:#222;">193,964.69</div>
<div class="t" style="left:1032.5px;width:200px;text-align:right;top:968.26px;font-size:18px;line-height:18px;font-weight:700;color:#222;">2.50</div>
<div class="t" style="left:1200px;width:200px;text-align:right;top:968.26px;font-size:18px;line-height:18px;font-weight:700;color:#222;">484,911.73</div>
<div class="t" style="left:1452px;width:200px;text-align:right;top:968.26px;font-size:18px;line-height:18px;font-weight:700;color:#222;">11.58</div>
<div class="t" style="left:1635px;width:200px;text-align:right;top:968.26px;font-size:18px;line-height:18px;font-weight:700;color:#222;">11.49</div>
<div class="t" style="left:1887.5px;width:200px;text-align:right;top:968.26px;font-size:18px;line-height:18px;font-weight:700;color:#222;">56,131.77</div>
<div class="t" style="left:2070px;width:200px;text-align:right;top:968.26px;font-size:18px;line-height:18px;font-weight:700;color:#222;">55,730.12</div>
<div style="position:absolute;left:540px;top:802px;width:182px;height:1px;background:#e0e0e0"></div>
<div style="position:absolute;left:540px;top:996px;width:182px;height:1px;background:#e0e0e0"></div>
<div style="position:absolute;left:1076px;top:607px;width:1px;height:390px;background:#e2e2e2"></div>
<div style="position:absolute;left:1244px;top:607px;width:1px;height:390px;background:#e2e2e2"></div>
<div style="position:absolute;left:1412px;top:607px;width:1px;height:390px;background:#e2e2e2"></div>
<div style="position:absolute;left:1664px;top:607px;width:1px;height:390px;background:#e2e2e2"></div>
<div style="position:absolute;left:1847px;top:607px;width:1px;height:390px;background:#e2e2e2"></div>
<div style="position:absolute;left:2099px;top:607px;width:1px;height:390px;background:#e2e2e2"></div>
<div style="position:absolute;left:2281px;top:607px;width:1px;height:390px;background:#e2e2e2"></div>
<div style="position:absolute;left:721.5px;top:607px;width:1px;height:390px;background:#e4e4e4"></div>
<div class="t" style="left:553px;top:695.69px;font-size:17.5px;line-height:17.5px;">In Design</div>
<div class="t" style="left:553px;top:890.69px;font-size:17.5px;line-height:17.5px;">Mined</div>
<div class="t" style="left:535.5px;top:1036.26px;font-size:18px;line-height:18px;color:#6a6a6a;">Differences may occur in totals due to rounding.</div>
<div style="position:absolute;left:529px;top:474px;width:20px;height:558px;border:3px solid #fb5232;box-sizing:border-box"></div>
<svg style="position:absolute;left:547px;top:568px;" width="32" height="33" viewBox="0 0 32 33"><g transform="translate(15.5,16.5)"><g fill="#1b1b1d" stroke="#f4f4f4" stroke-width="1.4" stroke-linejoin="round"><path d="M0,-15 L8.5,-6.5 L-8.5,-6.5 Z"/><path d="M0,15 L8.5,6.5 L-8.5,6.5 Z"/><path d="M-15,0 L-6.5,-8.5 L-6.5,8.5 Z"/><path d="M15,0 L6.5,-8.5 L6.5,8.5 Z"/></g><rect x="-1.7" y="-11" width="3.4" height="22" fill="#1b1b1d"/><rect x="-11" y="-1.7" width="22" height="3.4" fill="#1b1b1d"/><g fill="#444244" stroke="#f4f4f4" stroke-width="1.4"><rect x="2.4" y="-8.2" width="5.8" height="5.8"/><rect x="-8.2" y="-8.2" width="5.8" height="5.8"/><rect x="2.4" y="2.4" width="5.8" height="5.8"/><rect x="-8.2" y="2.4" width="5.8" height="5.8"/></g></g></svg>
<svg style="position:absolute;left:560px;top:540px;" width="260" height="70" viewBox="0 0 260 70"><defs><filter id="sh" x="-20%" y="-50%" width="140%" height="200%"><feGaussianBlur in="SourceAlpha" stdDeviation="3"/><feOffset dx="2" dy="5"/><feComponentTransfer><feFuncA type="linear" slope="0.55"/></feComponentTransfer><feMerge><feMergeNode/><feMergeNode in="SourceGraphic"/></feMerge></filter></defs><g filter="url(#sh)"><path d="M243,15.5 L243,24.5 L48,38.5 L49,49 L18,36 L47,19 L47.5,29.5 Z" fill="#fb5232"/></g></svg>

</body></html>
